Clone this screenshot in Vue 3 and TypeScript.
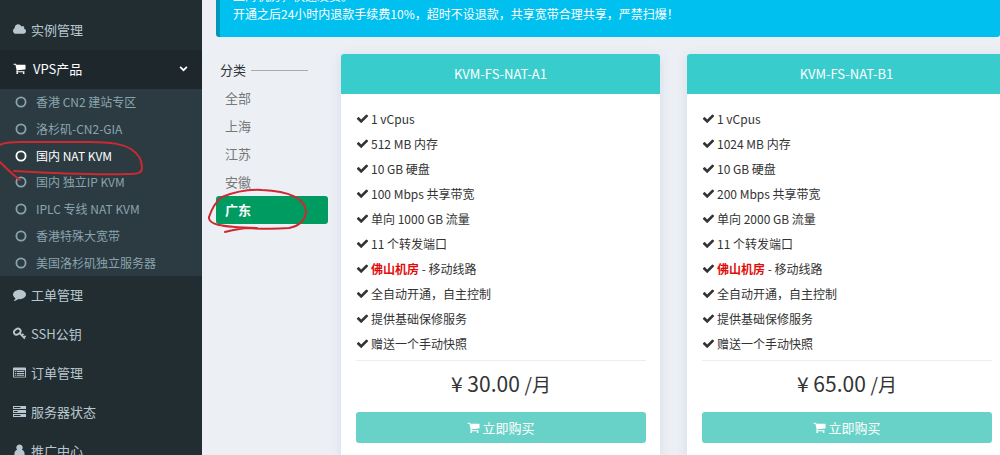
<script setup lang="ts">
import { ref } from 'vue'

type IconName = 'cloud' | 'comment' | 'key' | 'list' | 'server' | 'user'

interface MenuItem {
  label: string
  icon: IconName
}

interface Plan {
  name: string
  memory: string
  bandwidth: string
  traffic: string
  price: string
}

const lowerMenu: MenuItem[] = [
  { label: '工单管理', icon: 'comment' },
  { label: 'SSH公钥', icon: 'key' },
  { label: '订单管理', icon: 'list' },
  { label: '服务器状态', icon: 'server' },
  { label: '推广中心', icon: 'user' },
]

const products: string[] = [
  '香港 CN2 建站专区',
  '洛杉矶-CN2-GIA',
  '国内 NAT KVM',
  '国内 独立IP KVM',
  'IPLC 专线 NAT KVM',
  '香港特殊大宽带',
  '美国洛杉矶独立服务器',
]
const activeProduct = ref('国内 NAT KVM')

const regions: string[] = ['全部', '上海', '江苏', '安徽', '广东']
const activeRegion = ref('广东')

const plans: Plan[] = [
  { name: 'KVM-FS-NAT-A1', memory: '512 MB 内存', bandwidth: '100 Mbps 共享带宽', traffic: '单向 1000 GB 流量', price: '30.00' },
  { name: 'KVM-FS-NAT-B1', memory: '1024 MB 内存', bandwidth: '200 Mbps 共享带宽', traffic: '单向 2000 GB 流量', price: '65.00' },
]

const featuresOf = (p: Plan): { strong?: string; text: string }[] => [
  { text: '1 vCpus' },
  { text: p.memory },
  { text: '10 GB 硬盘' },
  { text: p.bandwidth },
  { text: p.traffic },
  { text: '11 个转发端口' },
  { strong: '佛山机房', text: ' - 移动线路' },
  { text: '全自动开通，自主控制' },
  { text: '提供基础保修服务' },
  { text: '赠送一个手动快照' },
]

const cartPath =
  'M704 1536q0 52-38 90t-90 38-90-38-38-90 38-90 90-38 90 38 38 90zm896 0q0 52-38 90t-90 38-90-38-38-90 38-90 90-38 90 38 38 90zm128-1088v512q0 24-16.5 42.5t-40.5 21.5l-1044 122q13 60 13 70 0 16-24 64h920q26 0 45 19t19 45-19 45-45 19h-1024q-26 0-45-19t-19-45q0-11 8-31.5t16-36 21.5-40 15.5-29.5l-177-823h-204q-26 0-45-19t-19-45 19-45 45-19h256q16 0 28.5 6.5t19.5 15.5 13 24.5 8 26 5.5 29.5 4.5 26h1201q26 0 45 19t19 45z'
const checkPath =
  'M1671 566q0 40-28 68l-724 724-136 136q-28 28-68 28t-68-28l-136-136-362-362q-28-28-28-68t28-68l136-136q28-28 68-28t68 28l294 295 656-657q28-28 68-28t68 28l136 136q28 28 28 68z'
const cloudPath =
  'M1984 1152q0 159-112.5 271.5t-271.5 112.5h-1088q-185 0-316.5-131.5t-131.5-316.5q0-132 71-241.5t187-163.5q-2-28-2-43 0-212 150-362t362-150q158 0 286.5 88t187.5 230q70-62 166-62 106 0 181 75t75 181q0 75-41 138 129 30 213 134.5t84 239.5z'
const commentPath =
  'M1792 896q0 174-120 321.5t-326 233-450 85.5q-70 0-145-8-198 175-460 242-49 14-114 22-17 2-30.5-9t-17.5-29v-1q-3-4-.5-12t2-10 4.5-9.5l6-9 7-8.5 8-9q7-8 31-34.5t34.5-38 31-39.5 32.5-51 27-59 26-76q-157-89-247.5-220t-90.5-281q0-130 71-248.5t191-204.5 286-136.5 348-50.5q244 0 450 85.5t326 233 120 321.5z'
</script>

<template>
  <div class="page">
    <aside class="sidebar">
      <nav aria-label="主菜单">
        <a class="menu-item" href="#instances">
          <svg class="icon" viewBox="64 128 1920 1536" aria-hidden="true"><path fill="currentColor" :d="cloudPath" /></svg>
          <span>实例管理</span>
        </a>
        <a class="menu-item open" href="#vps">
          <svg class="icon" viewBox="0 0 1792 1792" aria-hidden="true"><path fill="currentColor" :d="cartPath" /></svg>
          <span class="grow">VPS产品</span>
          <svg class="chevron" viewBox="0 0 8 8" aria-hidden="true"><path d="M1 2.5 4 5.5 7 2.5" fill="none" stroke="currentColor" stroke-width="1.5" /></svg>
        </a>
        <ul class="submenu">
          <li v-for="item in products" :key="item">
            <a href="#product" :class="{ active: item === activeProduct }" @click.prevent="activeProduct = item">
              <svg class="ring" viewBox="0 0 12 12" aria-hidden="true"><circle cx="6" cy="6" r="4.6" fill="none" stroke="currentColor" stroke-width="1.8" /></svg>
              <span>{{ item }}</span>
            </a>
          </li>
        </ul>
        <a v-for="item in lowerMenu" :key="item.label" class="menu-item" href="#menu">
          <svg v-if="item.icon === 'comment'" class="icon" viewBox="0 0 1792 1792" aria-hidden="true"><path fill="currentColor" :d="commentPath" /></svg>
          <svg v-else-if="item.icon === 'key'" class="icon" viewBox="0 0 14 14" aria-hidden="true">
            <g fill="none" stroke="currentColor">
              <ellipse cx="4.6" cy="5" rx="3.8" ry="2.9" stroke-width="2" transform="rotate(-35 4.6 5)" />
              <path d="M6.8 6.4 12.8 12.4M9.2 9.4l2.1-2.1M11.4 11.6l2.1-2.1" stroke-width="1.9" />
            </g>
          </svg>
          <svg v-else-if="item.icon === 'list'" class="icon" viewBox="0 0 14 14" aria-hidden="true">
            <path fill="currentColor" fill-rule="evenodd" d="M1 1.500h12a1 1 0 0 1 1 1v9a1 1 0 0 1-1 1H1a1 1 0 0 1-1-1v-9a1 1 0 0 1 1-1zM1 4.500v7h12v-7z" />
            <path d="M2 6h1.2M4 6h8M2 8h1.2M4 8h8M2 10h1.2M4 10h8" stroke="currentColor" stroke-width="1.1" />
          </svg>
          <svg v-else-if="item.icon === 'server'" class="icon" viewBox="0 0 14 14" aria-hidden="true">
            <path fill="currentColor" fill-rule="evenodd" d="M0 1h14v3.4H0zM1 2.2v1h7v-1zM0 5.3h14v3.4H0zM1 6.5v1h4v-1zM0 9.6h14V13H0zM1 10.8v1h7v-1z" />
          </svg>
          <svg v-else class="icon" viewBox="0 0 14 14" aria-hidden="true">
            <path fill="currentColor" d="M7 .5a3.3 3.5 0 0 1 2.6 5.8C11.8 7 12.5 9 12.5 11a2 2 0 0 1-2 2h-7a2 2 0 0 1-2-2c0-2 .7-4 2.9-4.7A3.3 3.5 0 0 1 7 .5z" />
          </svg>
          <span>{{ item.label }}</span>
        </a>
      </nav>
    </aside>

    <main class="content">
      <div class="notice">
        <p>上海机房，快速发货。</p>
        <p>开通之后24小时内退款手续费10%，超时不设退款，共享宽带合理共享，严禁扫爆！</p>
      </div>
      <div class="columns">
        <section class="filter">
          <h2>分类</h2>
          <button
            v-for="r in regions"
            :key="r"
            type="button"
            :class="{ active: r === activeRegion }"
            @click="activeRegion = r"
          >{{ r }}</button>
        </section>
        <div class="plans">
          <article v-for="plan in plans" :key="plan.name" class="card">
            <h3>{{ plan.name }}</h3>
            <div class="card-body">
              <ul class="features">
                <li v-for="f in featuresOf(plan)" :key="f.text">
                  <svg class="check" viewBox="0 0 1792 1792" aria-hidden="true"><path fill="currentColor" :d="checkPath" /></svg>
                  <span><strong v-if="f.strong">{{ f.strong }}</strong>{{ f.text }}</span>
                </li>
              </ul>
              <p class="price">¥ {{ plan.price }} <small>/月</small></p>
              <button type="button" class="buy">
                <svg class="cart" viewBox="0 0 1792 1792" aria-hidden="true"><path fill="currentColor" :d="cartPath" /></svg>
                <span>立即购买</span>
              </button>
            </div>
          </article>
        </div>
      </div>
    </main>

    <svg class="marks" width="320" height="240" viewBox="0 0 320 240" aria-hidden="true">
      <path d="M0 145C5 142 12 142 20 142L90 142C112 142 122 144 131 149C139 154 142 161 142 168C142 173 138 174 128 174C90 175 50 173 14 171" />
      <path d="M0 162C6 168 12 174 20 180" />
      <path d="M225 232C232 230 239 229 246 228C262 229 278 229 289 228C300 226 306 219 306 211C305 199 290 191 262 190C246 189 232 193 222 197C214 203 211 211 209 217C208 224 218 227 257 228" />
    </svg>
  </div>
</template>

<style>
body {
  margin: 0;
  overflow: hidden;
}
</style>

<style scoped>
.page {
  position: relative;
  display: flex;
  height: 100vh;
  overflow: hidden;
  background: #ecf0f5;
  color: #333;
  font: 12px/18px "Noto Sans CJK SC", "Noto Sans", sans-serif;
}
ul, p, h2, h3 {
  margin: 0;
  padding: 0;
  font-weight: 400;
}
ul {
  list-style: none;
}
a {
  text-decoration: none;
}
button {
  border: 0;
  font: inherit;
  cursor: pointer;
}
.sidebar {
  flex: 0 0 202px;
  box-sizing: border-box;
  padding-top: 11px;
  background: #222d32;
}
.menu-item {
  display: flex;
  align-items: center;
  gap: 5px;
  box-sizing: border-box;
  height: 39px;
  padding: 0 14px 2px 13px;
  color: #b8c7ce;
  font-size: 13px;
}
.menu-item.open {
  gap: 7px;
  background: #1e282c;
  color: #fff;
}
.icon {
  flex: none;
  width: 13px;
  height: 13px;
}
.grow {
  flex: 1;
}
.chevron {
  width: 9px;
  height: 9px;
}
.submenu {
  display: grid;
  grid-auto-rows: 1fr;
  height: 187px;
  background: #2c3b41;
}
.submenu a {
  display: flex;
  align-items: center;
  gap: 9px;
  height: 100%;
  padding-left: 15px;
  color: #8aa4af;
}
.submenu a.active {
  color: #fff;
}
.ring {
  width: 12px;
  height: 12px;
}
.content {
  flex: 1;
  min-width: 0;
}
.notice {
  margin: -25px 0 0 14px;
  padding: 12px 14px 14px 13px;
  border-left: 4px solid #0097bc;
  border-radius: 3px;
  background: #00c0ef;
  color: #fff;
}
.columns {
  display: flex;
  align-items: flex-start;
  gap: 13px;
  padding: 17px 0 0 14px;
}
.filter {
  flex: 0 0 112px;
  padding-top: 7px;
}
.filter h2 {
  display: flex;
  align-items: center;
  gap: 5px;
  padding: 0 20px 5px 4px;
  font-size: 13px;
}
.filter h2::after {
  content: "";
  flex: 1;
  height: 1px;
  background: #aaa;
}
.filter button {
  display: block;
  width: 100%;
  height: 28px;
  padding: 0 9px;
  border-radius: 3px;
  background: transparent;
  color: #777;
  font-size: 13px;
  text-align: left;
}
.filter button.active {
  background: #009b60;
  color: #fff;
  font-weight: 700;
}
.plans {
  flex: 1;
  display: grid;
  grid-template-columns: 1fr 1fr;
  gap: 27px;
  margin-right: -6px;
}
.card {
  border-radius: 3px;
  background: #fff;
  box-shadow: 0 2px 12px rgba(60, 80, 120, 0.12);
}
.card h3 {
  border-radius: 3px 3px 0 0;
  background: #39cccc;
  color: #fff;
  font-size: 13px;
  line-height: 40px;
  text-align: center;
}
.card-body {
  padding: 12px 14px 15px 15px;
}
.features {
  padding-bottom: 4px;
  border-bottom: 1px solid #eee;
}
.features li {
  display: flex;
  align-items: center;
  gap: 2px;
  height: 25px;
}
.check {
  width: 13px;
  height: 13px;
}
.features strong {
  color: #e00d0d;
  font-weight: 700;
}
.price {
  padding: 7px 0 13px;
  font-size: 21px;
  line-height: 30px;
  text-align: center;
}
.price small {
  font-size: 19px;
}
.buy {
  display: flex;
  align-items: center;
  justify-content: center;
  gap: 2px;
  width: 100%;
  height: 31px;
  border-radius: 3px;
  background: #69d2c8;
  color: #fff;
  font-size: 13px;
}
.cart {
  width: 13px;
  height: 13px;
}
.marks {
  position: absolute;
  top: 0;
  left: 0;
  pointer-events: none;
  fill: none;
  stroke: #cb2a30;
  stroke-width: 2;
  stroke-linecap: round;
}
</style>
